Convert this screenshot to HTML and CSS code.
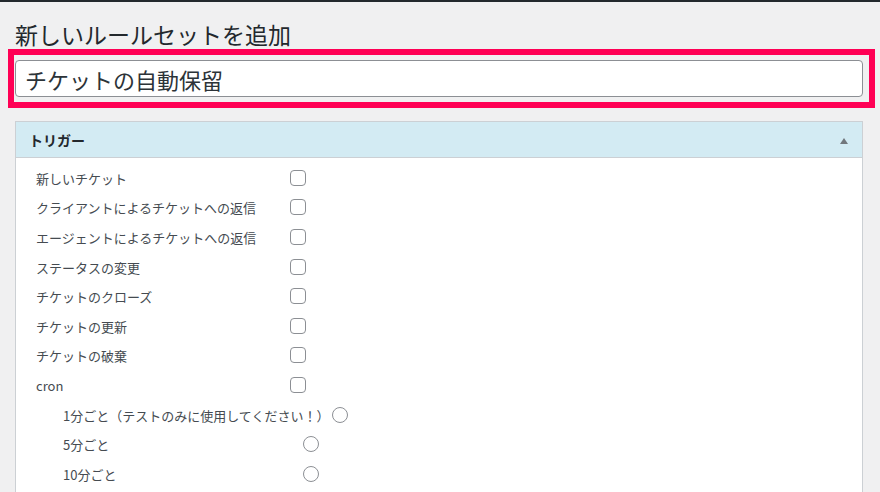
FILE: index.html
```html
<html>
	<head>
		<title>新しいルールセットを追加</title>
		<meta charset="utf-8">
		<link rel="stylesheet" href="styles.css">
	</head>
	<body>
		<div class="topbar"></div>
		<div class="wrap">
			<h1 class="page-title">新しいルールセットを追加</h1>
			<div class="highlight">
				<input class="title-input" type="text" value="チケットの自動保留">
			</div>
			<div class="panel">
				<div class="panel-head">
					<span>トリガー</span>
					<span class="toggle"></span>
				</div>
				<div class="panel-body">
					<label class="row"><span class="label">新しいチケット</span><input type="checkbox"></label>
					<label class="row"><span class="label">クライアントによるチケットへの返信</span><input type="checkbox"></label>
					<label class="row"><span class="label">エージェントによるチケットへの返信</span><input type="checkbox"></label>
					<label class="row"><span class="label">ステータスの変更</span><input type="checkbox"></label>
					<label class="row"><span class="label">チケットのクローズ</span><input type="checkbox"></label>
					<label class="row"><span class="label">チケットの更新</span><input type="checkbox"></label>
					<label class="row"><span class="label">チケットの破棄</span><input type="checkbox"></label>
					<label class="row"><span class="label">cron</span><input type="checkbox"></label>
					<label class="row sub"><span class="label">1分ごと（テストのみに使用してください！）</span><input type="radio" name="cron"></label>
					<label class="row sub"><span class="label">5分ごと</span><input type="radio" name="cron"></label>
					<label class="row sub"><span class="label">10分ごと</span><input type="radio" name="cron"></label>
				</div>
			</div>
		</div>
	</body>
</html>
```

FILE: styles.css
```css
html {
	font: 13px 'Noto Sans CJK JP', 'Noto Sans', sans-serif;
}
body {
	margin: 0;
	background-color: #f0f0f1;
	color: #454b51;
	overflow: hidden;
}
.topbar {
	height: 2px;
	background-color: #23282d;
}
.wrap {
	padding: 0 17px 0 15px;
}
.page-title {
	margin: 0;
	padding-top: 18px;
	height: 29px;
	font-size: 23px;
	font-weight: 400;
	line-height: 29px;
	color: #23282d;
}
.highlight {
	margin: 0 -12px 0 -7px;
	padding: 5px 6px 5px 1px;
	border: 6px solid #ff0055;
}
.title-input {
	display: block;
	box-sizing: border-box;
	width: 100%;
	height: 37px;
	margin: 0;
	padding: 0 9px;
	border: 1px solid #8c8f94;
	border-radius: 4px;
	background-color: #fff;
	font: 22px 'Noto Sans CJK JP', sans-serif;
	color: #2c3338;
	outline: none;
}
.panel {
	margin-top: 13px;
	border: 1px solid #ccd0d4;
	border-bottom: none;
	background-color: #fff;
	height: 371px;
}
.panel-head {
	display: flex;
	justify-content: space-between;
	align-items: center;
	height: 35px;
	padding: 0 14px 0 13px;
	background-color: #d3ebf3;
	border-bottom: 1px solid #ccd0d4;
	font-size: 14px;
	font-weight: 700;
	color: #23282d;
}
.toggle {
	width: 0;
	height: 0;
	margin-top: 3px;
	border-left: 4px solid transparent;
	border-right: 4px solid transparent;
	border-bottom: 6px solid #72777c;
}
.panel-body {
	padding: 5px 0 0 20px;
}
.row {
	display: flex;
	align-items: center;
	height: 29.6px;
}
.row .label {
	width: 254px;
	flex-shrink: 0;
	padding-top: 1px;
}
.row.sub {
	padding-left: 27px;
}
.row.sub .label {
	width: auto;
	min-width: 237px;
	padding-right: 3px;
}
.row input {
	-webkit-appearance: none;
	appearance: none;
	width: 16px;
	height: 16px;
	margin: 0;
	border: 1px solid #8c8f94;
	border-radius: 4px;
	background-color: #fff;
}
.row input[type=radio] {
	border-radius: 50%;
}
```
